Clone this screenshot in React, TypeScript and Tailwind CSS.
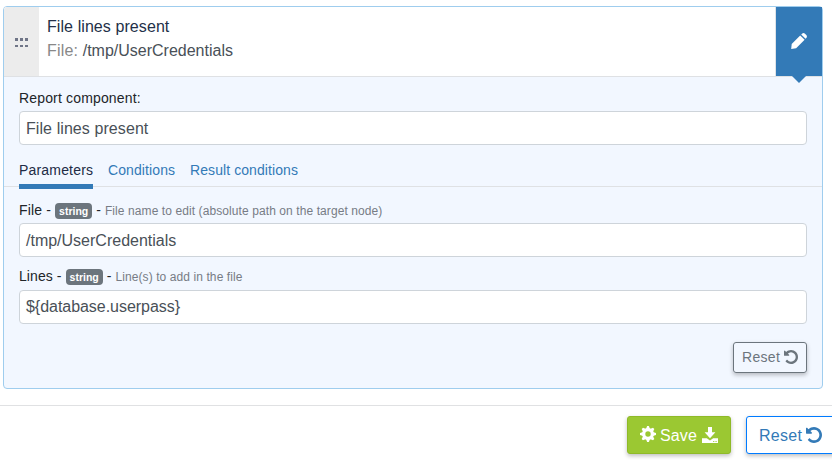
import React from 'react';

const UNDO =
  'M1664 896q0 156-61 298t-164 245-245 164-298 61q-172 0-327-72.5t-264-204.5q-7-10-6.5-22.5t8.5-20.5l137-138q10-9 25-9 16 2 23 12 73 95 179 147t225 52q104 0 198.5-40.5t163.5-109.5 109.5-163.5 40.5-198.5-40.5-198.5-109.5-163.5-163.5-109.5-198.5-40.5q-98 0-188 35.5t-160 101.5l137 138q31 30 14 69-17 40-59 40h-448q-26 0-45-19t-19-45v-448q0-42 40-59 39-17 69 14l130 129q107-101 244.5-156.5t284.5-55.5q156 0 298 61t245 164 164 245 61 298z';

function UndoIcon({ className }: { className: string }) {
  return (
    <svg viewBox="128 128 1536 1536" fill="currentColor" className={className}>
      <path d={UNDO} />
    </svg>
  );
}

function CogIcon() {
  return (
    <svg viewBox="0 0 16 16" fill="currentColor" className="size-4 shrink-0">
      <circle cx="8" cy="8" r="4.3" fill="none" stroke="currentColor" strokeWidth="3.2" />
      {[0, 45, 90, 135, 180, 225, 270, 315].map((angle) => (
        <path key={angle} d="M5.9 3.2 7.1 0h1.8l1.2 3.2z" transform={`rotate(${angle} 8 8)`} />
      ))}
    </svg>
  );
}

function DownloadIcon() {
  return (
    <svg viewBox="0 0 16 16" fill="currentColor" className="size-4 shrink-0">
      <path d="M6 0h4v5.2h3.4L8 11.2 2.6 5.2H6z" />
      <path
        fillRule="evenodd"
        d="M0 11.3h4.8L8 13.6l3.2-2.3H16V16H0zM11.2 14v1.1h1.1V14zM13.5 14v1.1h1.1V14z"
      />
    </svg>
  );
}

function PencilIcon() {
  return (
    <svg viewBox="0 0 16 16" fill="currentColor" className="mb-0.5 size-4 shrink-0">
      <path d="M0.7 10.9 9.2 2.4 13.6 6.8 5.1 15.3 0.2 16z" />
      <path d="M10.2 1.5 11 .7q1.5-1.3 3 0L15.3 2q1.3 1.5 0 3l-.8.8z" />
    </svg>
  );
}

function TextField({ value, className }: { value: string; className: string }) {
  return (
    <div
      className={`flex h-[34px] items-center rounded border border-[#ced4da] bg-white px-1.5 text-base text-[#495057] ${className}`}
    >
      {value}
    </div>
  );
}

interface ParameterProps {
  name: string;
  help: string;
  value: string;
  labelClass: string;
  fieldClass: string;
}

function Parameter({ name, help, value, labelClass, fieldClass }: ParameterProps) {
  return (
    <div>
      <div className="flex h-5 items-baseline gap-1 whitespace-nowrap leading-5">
        <span className={labelClass}>{name} -</span>
        <span className="rounded bg-[#6c757d] px-1 text-[10.5px] font-bold leading-4 text-white">string</span>
        <span>-</span>
        <span className="text-xs leading-5 tracking-[0.09px] text-[#777c85]">{help}</span>
      </div>
      <TextField value={value} className={fieldClass} />
    </div>
  );
}

export default function App() {
  return (
    <div className="h-[460px] w-[832px] overflow-hidden bg-white pt-1.5 font-['Liberation_Sans',Arial,sans-serif] text-sm text-[#212529]">
      <div className="ml-[3px] flex h-[383px] w-[820px] flex-col rounded border border-[#9fcdee] bg-[#f2f7ff]">
        <div className="flex h-[70px] shrink-0 rounded-t-[3px] border-b border-[#dfe1e4] bg-white">
          <div className="flex w-[35px] items-center justify-center rounded-tl-[3px] bg-[#ececec] pt-0.5">
            <div className="grid grid-cols-3 gap-x-[2.5px] gap-y-1">
              {[0, 1, 2, 3, 4, 5].map((dot) => (
                <span key={dot} className="h-[2.5px] w-[2.5px] bg-[#6f7587]" />
              ))}
            </div>
          </div>
          <div className="flex-1 pl-2 pt-2 text-base leading-6">
            <div className="tracking-[0.08px] text-[#233048]">File lines present</div>
            <div className="text-[#495057]">
              <span className="tracking-[0.2px] text-[#888]">File:</span> /tmp/UserCredentials
            </div>
          </div>
          <div className="relative flex w-[47px] items-center justify-center border-l border-[#dfe3e8] bg-[#337ab7] text-white">
            <PencilIcon />
            <span className="absolute left-4 top-full border-x-[7px] border-t-[7px] border-x-transparent border-t-[#337ab7]" />
          </div>
        </div>
        <div className="px-[15px] pt-[11px]">
          <div className="mb-[3px] h-5 leading-5 tracking-[0.16px]">Report component:</div>
          <TextField value="File lines present" className="pt-0.5 tracking-[0.08px]" />
        </div>
        <div className="mt-[15px] flex h-[27px] shrink-0 gap-[15px] border-b border-[#dfe1e4] pl-[15px] leading-5 text-[#337ab7]">
          <span className="h-[29px] w-[74px] border-b-[5px] border-[#337ab7] tracking-[0.18px] text-[#212b45]">
            Parameters
          </span>
          <span className="w-[67px] tracking-[0.1px]">Conditions</span>
          <span className="tracking-[0.08px]">Result conditions</span>
        </div>
        <div className="flex flex-col gap-[9px] px-[15px] pt-[13px]">
          <Parameter
            name="File"
            help="File name to edit (absolute path on the target node)"
            value="/tmp/UserCredentials"
            labelClass="tracking-[0.16px]"
            fieldClass="mt-[3px] pt-0.5"
          />
          <Parameter
            name="Lines"
            help="Line(s) to add in the file"
            value="${database.userpass}"
            labelClass="tracking-[0.08px]"
            fieldClass="mt-1 tracking-[-0.04px]"
          />
        </div>
        <div className="mt-[18px] flex justify-end pr-[15px]">
          <button className="flex h-[31px] w-[74px] items-center rounded-[3px] border border-[#6c757d] pb-0.5 pl-2 tracking-[0.3px] text-[#6c757d] shadow-[0_2px_4px_rgba(0,0,0,0.25)]">
            <span className="w-[42px] text-left">Reset</span>
            <UndoIcon className="size-3.5 shrink-0" />
          </button>
        </div>
      </div>
      <div className="mt-4 flex gap-[15px] border-t border-[#e0e1e3] pl-[627px] pt-2.5 text-base">
        <button className="flex h-[38px] w-[104px] shrink-0 items-center rounded-[3px] border border-[#8fba28] bg-[#9bc832] pl-3 text-white shadow-[0_2px_4px_rgba(0,0,0,0.25)]">
          <span className="-mt-0.5">
            <CogIcon />
          </span>
          <span className="ml-1 w-[42px] pt-0.5 text-left tracking-[0.15px]">Save</span>
          <DownloadIcon />
        </button>
        <button className="flex h-[38px] w-[90px] shrink-0 items-center rounded-[3px] border border-[#007bff] bg-white pl-3 text-[#337ab7] shadow-[0_2px_4px_rgba(0,0,0,0.25)]">
          <span className="w-[47px] pt-0.5 text-left tracking-[0.3px]">Reset</span>
          <UndoIcon className="size-4 shrink-0" />
        </button>
      </div>
    </div>
  );
}
